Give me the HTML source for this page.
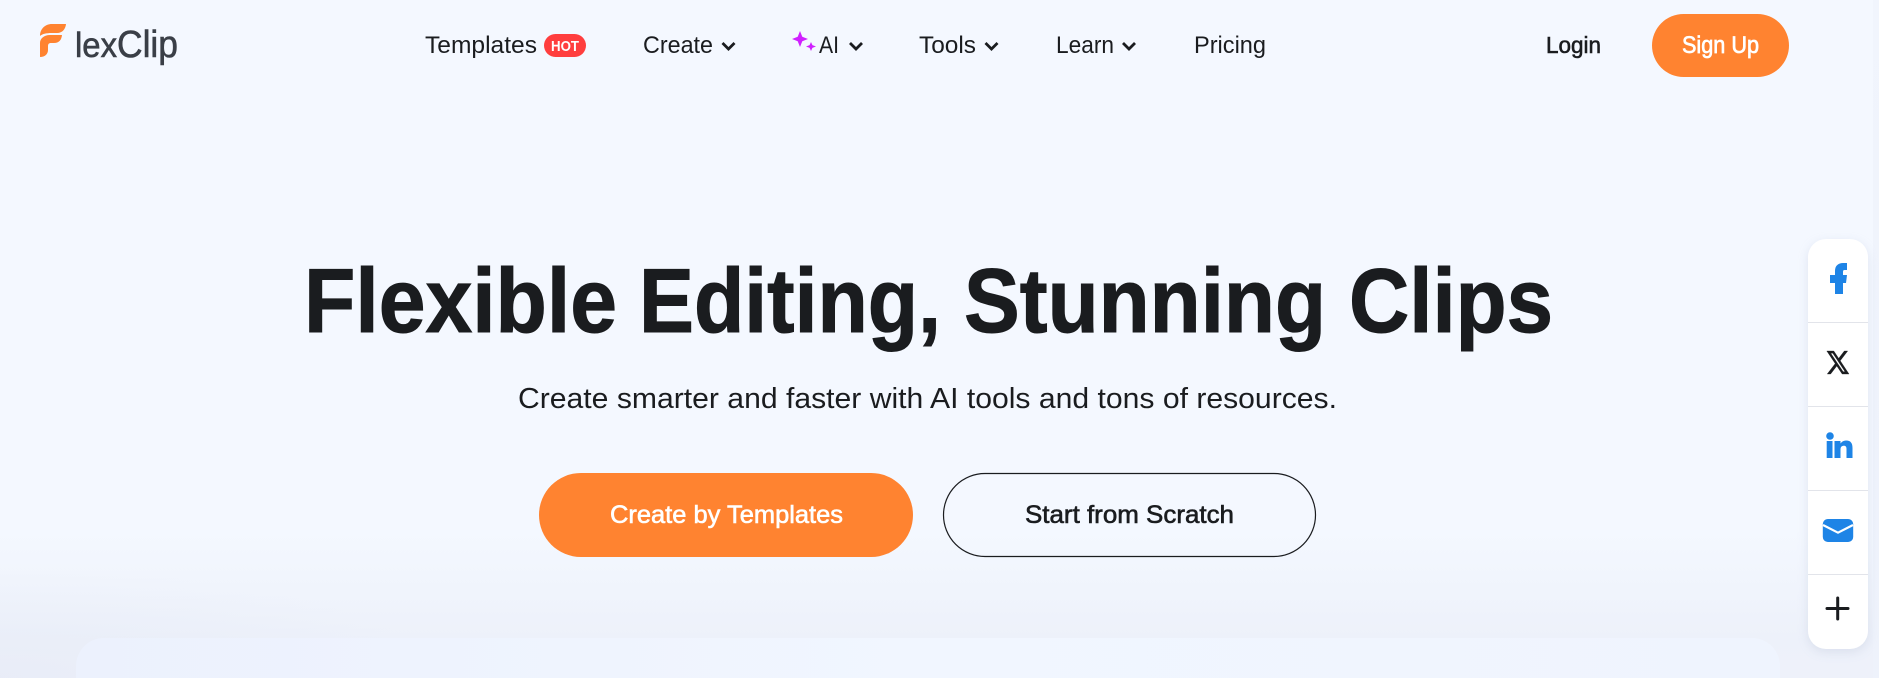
<!DOCTYPE html>
<html lang="en">
<head>
<meta charset="utf-8">
<title>FlexClip</title>
<style>
html,body{margin:0;padding:0;width:1879px;height:678px;overflow:hidden;background:#f4f8ff}
.page{position:relative;width:1879px;height:678px;overflow:hidden}
.bg{position:absolute;left:0;top:0;width:1879px;height:678px;
background:
radial-gradient(ellipse 440px 110px at 0px 678px,rgba(226,231,244,.45),rgba(226,231,244,0) 100%),
linear-gradient(180deg,#f4f8ff 0,#f4f8ff 530px,#edf1fa 638px,#eef1fa 678px)}
.strip{position:absolute;left:1873px;top:0;width:6px;height:678px;background:linear-gradient(180deg,#f1f5fd,#eef2fb)}
.card{position:absolute;left:76px;top:638px;width:1704px;height:40px;border-radius:28px 28px 0 0;background:linear-gradient(90deg,#ecf1fd,#f1f6ff 50%,#eff4fe)}
.side{position:absolute;left:1808px;top:239px;width:60px;height:410px;background:#fff;border-radius:18px;box-shadow:0 3px 10px rgba(170,180,205,.28)}
svg{position:absolute;left:0;top:0}
text{font-family:"Liberation Sans",sans-serif;fill:#1a1c1f}
.m{stroke:#1a1c1f;stroke-width:.6}
.w{fill:#fff;stroke:#fff;stroke-width:.6}
.h{font-size:91px;font-weight:700;stroke:#1a1c1f;stroke-width:1}
.ch{fill:none;stroke:#1a1c1f;stroke-width:2.8}
</style>
</head>
<body>
<div class="page">
<div class="bg"></div>
<div class="strip"></div>
<div class="card"></div>
<div class="side"></div>
<svg width="1879" height="678" viewBox="0 0 1879 678" xmlns="http://www.w3.org/2000/svg">
  <!-- logo -->
  <path fill="#ff8330" d="M40 36C40 29 45 24 52 24L66 24C65.5 29 62.5 33 57 33L52 33C46 33 42 34 40 36Z"/>
  <path fill="#ff8330" d="M40 57V43C40 38.5 44 35 50 35L62 35C61.5 40 59 43 54 43L51 43C49 43 48 44 48 46V50C48 54 45 57 40 57Z"/>
  <text x="75" y="57" font-size="35" textLength="42" lengthAdjust="spacingAndGlyphs" style="fill:#3a3f47;stroke:#3a3f47;stroke-width:.6">lex</text>
  <text x="117" y="57" font-size="38" textLength="61" lengthAdjust="spacingAndGlyphs" style="fill:#3a3f47;stroke:#3a3f47;stroke-width:.6">Clip</text>

  <!-- nav -->
  <text x="425" y="53" font-size="24" textLength="112" lengthAdjust="spacingAndGlyphs">Templates</text>
  <rect x="544" y="34" width="42" height="23" rx="11.5" fill="#ff3e3e"/>
  <text x="551" y="51" font-size="14.5" font-weight="700" textLength="28" lengthAdjust="spacingAndGlyphs" style="fill:#fff">HOT</text>

  <text x="643" y="53" font-size="24" textLength="70" lengthAdjust="spacingAndGlyphs">Create</text>
  <path class="ch" d="M722.5 43L728.5 49L734.5 43"/>

  <path fill="#d020ff" d="M800 31L802.3 36.7L808 39L802.3 41.3L800 47L797.7 41.3L792 39L797.7 36.7Z"/>
  <path fill="#d020ff" d="M811 42L812.4 45.1L816 46.5L812.4 47.9L811 51L809.6 47.9L806 46.5L809.6 45.1Z"/>
  <text x="819" y="53" font-size="24" textLength="20" lengthAdjust="spacingAndGlyphs">AI</text>
  <path class="ch" d="M850 43L856 49L862 43"/>

  <text x="919" y="53" font-size="24" textLength="57" lengthAdjust="spacingAndGlyphs">Tools</text>
  <path class="ch" d="M985.5 43L991.5 49L997.5 43"/>

  <text x="1056" y="53" font-size="24" textLength="58" lengthAdjust="spacingAndGlyphs">Learn</text>
  <path class="ch" d="M1123 43L1129 49L1135 43"/>

  <text x="1194" y="53" font-size="24" textLength="72" lengthAdjust="spacingAndGlyphs">Pricing</text>

  <text class="m" x="1546" y="53" font-size="23.5" textLength="55" lengthAdjust="spacingAndGlyphs">Login</text>
  <rect x="1652" y="14" width="137" height="63" rx="31.5" fill="#ff8330"/>
  <text class="w" x="1682" y="53" font-size="24" textLength="77" lengthAdjust="spacingAndGlyphs" style="stroke-width:.7">Sign Up</text>

  <!-- hero -->
  <text class="h" x="304" y="332" textLength="313" lengthAdjust="spacingAndGlyphs">Flexible</text>
  <text class="h" x="639" y="332" textLength="302" lengthAdjust="spacingAndGlyphs">Editing,</text>
  <text class="h" x="964" y="332" textLength="362" lengthAdjust="spacingAndGlyphs">Stunning</text>
  <text class="h" x="1349" y="332" textLength="204" lengthAdjust="spacingAndGlyphs">Clips</text>
  <text x="518" y="408" font-size="29" textLength="819" lengthAdjust="spacingAndGlyphs">Create smarter and faster with AI tools and tons of resources.</text>

  <rect x="539" y="473" width="374" height="84" rx="42" fill="#ff8330"/>
  <text class="w" x="610" y="523" font-size="25" textLength="233" lengthAdjust="spacingAndGlyphs">Create by Templates</text>
  <rect x="943.5" y="473.5" width="372" height="83" rx="41.5" fill="none" stroke="#1a1c1f" stroke-width="1.2"/>
  <text class="m" x="1025" y="523" font-size="25" textLength="209" lengthAdjust="spacingAndGlyphs">Start from Scratch</text>

  <!-- side panel -->
  <g fill="#e2e4ea">
    <rect x="1808" y="322" width="60" height="1"/>
    <rect x="1808" y="406" width="60" height="1"/>
    <rect x="1808" y="490" width="60" height="1"/>
    <rect x="1808" y="574" width="60" height="1"/>
  </g>
  <path fill="#1e84e6" d="M1835 294V283H1830V275H1835V271C1835 265.5 1838.5 263 1843 263H1847V270H1844.5C1843.3 270 1843 270.7 1843 272V275H1847L1846 283H1843V294Z"/>
  <path fill="#1a1c1f" stroke="#1a1c1f" stroke-width=".3" transform="translate(1825.5 348.35) scale(1.03 1.18)" d="M18.244 2.25h3.308l-7.227 8.26 8.502 11.24H16.17l-5.214-6.817L4.99 21.75H1.68l7.73-8.835L1.254 2.25H8.08l4.713 6.231zm-1.161 17.52h1.833L7.084 4.126H5.117z"/>
  <g fill="#1e84e6">
    <circle cx="1830" cy="436" r="3.8"/>
    <rect x="1826.7" y="441" width="5.8" height="17"/>
    <path d="M1834.5 441H1840.5V443.5C1841.8 441.5 1843.8 440.5 1846 440.5C1851 440.5 1852.5 443.5 1852.5 448V458H1846.5V449C1846.5 447 1845.8 445.8 1844 445.8C1841.8 445.8 1840.5 447 1840.5 449.5V458H1834.5Z"/>
    <rect x="1822.8" y="519" width="30.4" height="23" rx="5"/>
  </g>
  <path d="M1823 525L1838 532.7L1853 525" fill="none" stroke="#fff" stroke-width="2.2"/>
  <path d="M1837.7 598V619M1827 608.5H1848" fill="none" stroke="#1a1c1f" stroke-width="3" stroke-linecap="round"/>
</svg>
</div>
</body>
</html>
